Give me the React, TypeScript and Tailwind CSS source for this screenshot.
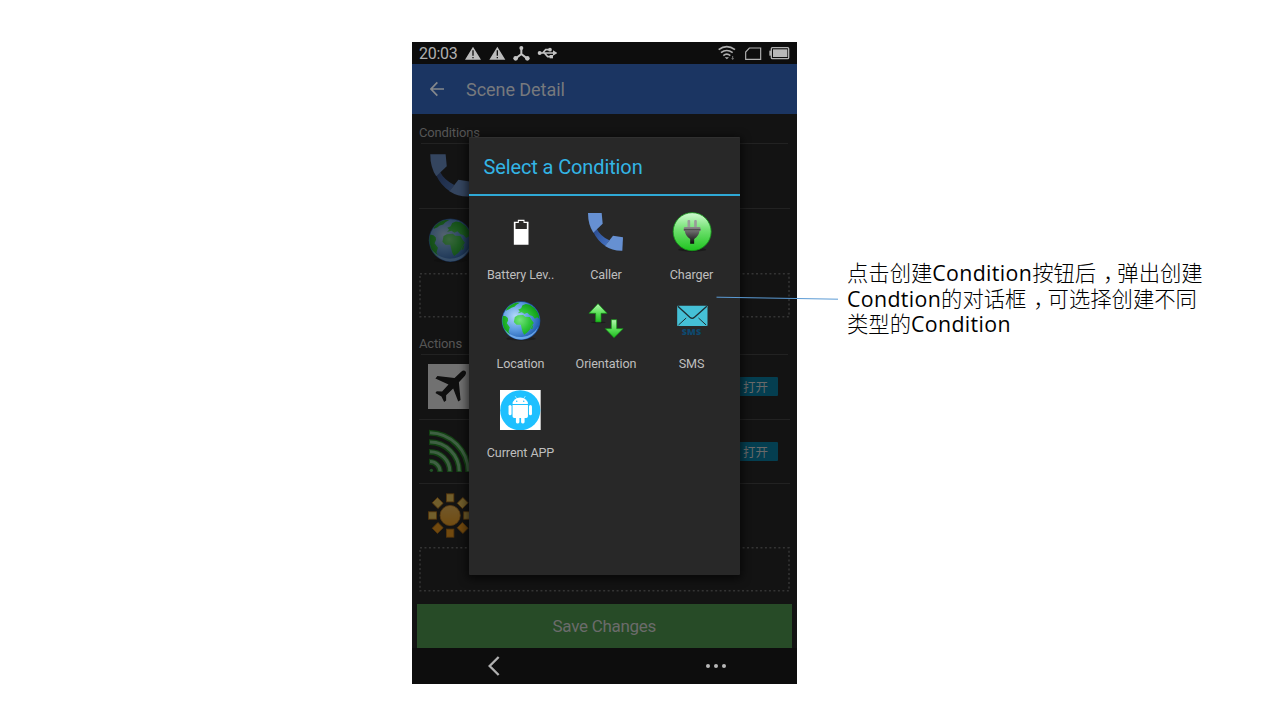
import type { ReactNode } from "react";

function Globe({ id, className }: { id: string; className: string }) {
  return (
    <svg viewBox="271.5 183 120 120" className={className}>
      <defs>
        <radialGradient id={`${id}-sea`} cx="0.35" cy="0.38" r="0.65">
          <stop offset="0" stopColor="#b3d9fa" />
          <stop offset="0.55" stopColor="#5f9de2" />
          <stop offset="1" stopColor="#2562b4" />
        </radialGradient>
        <radialGradient id={`${id}-land`} gradientUnits="userSpaceOnUse" cx="328" cy="240" r="60">
          <stop offset="0" stopColor="#72e27c" />
          <stop offset="0.5" stopColor="#2fc43a" />
          <stop offset="1" stopColor="#0c9a14" />
        </radialGradient>
        <clipPath id={`${id}-clip`}>
          <circle cx="331.5" cy="242" r="56" />
        </clipPath>
      </defs>
      <ellipse cx="331.5" cy="296" rx="44" ry="6" fill="#000" opacity="0.25" />
      <circle cx="331.5" cy="242" r="58" fill="#1d4f9c" />
      <circle cx="331.5" cy="242" r="56" fill={`url(#${id}-sea)`} />
      <g clipPath={`url(#${id}-clip)`} fill={`url(#${id}-land)`}>
        <path d="M272 226 L286 229 L292 234 L293 241 L289 250 L298 262 L294 275 L299 284 L288 284 L272 258 Z" />
        <path d="M290 200 L302 192 L318 187 L328 188 L318 194 L312 200 L303 203 L296 208 L286 212 Z" />
        <path d="M322 220 L328 214 L323 209 L332 205 L336 196 L346 192 L358 194 L372 204 L384 220 L388 238 L380 232 L373 236 L366 228 L358 226 L350 218 L342 222 L334 217 Z" />
        <path d="M313 231 L322 226 L338 225 L344 230 L358 231 L364 241 L370 249 L363 258 L359 268 L351 277 L341 284 L336 275 L333 263 L331 254 L318 254 L310 246 Z" />
        <path d="M364 257 L368 256 L366 266 L361 268 Z" />
      </g>
      <path d="M282 267 A54 54 0 0 0 383 260 A60 60 0 0 1 282 267" fill="#8cc6ff" opacity="0.65" />
    </svg>
  );
}

function Handset({ id, className }: { id: string; className: string }) {
  return (
    <svg viewBox="48 36 120 120" className={className}>
      <defs>
        <linearGradient id={id} x1="0" y1="0" x2="1" y2="1">
          <stop offset="0" stopColor="#2a4a8e" />
          <stop offset="1" stopColor="#4674c4" />
        </linearGradient>
      </defs>
      <path d="M70 96 L80 86 Q91 108 118 121 L106 138 Q82 122 70 96Z" fill={`url(#${id})`} />
      <path d="M54 39 L95 39 L98 71 L70 98 Q54 74 54 39Z" fill="#6690d2" />
      <path d="M129 107 L159 112 L157 152 Q128 153 105 138Z" fill="#6690d2" />
    </svg>
  );
}

function BatteryLevel() {
  return (
    <svg viewBox="271.5 276 120 120" className="size-10">
      <path d="M322 299 H342 V305 H354 V374 H310 V305 H322 Z" fill="#fff" />
      <path d="M325 303 H339 V309 H349 V327 H315 V309 H325 Z" fill="#2b2a28" />
    </svg>
  );
}

function Charger() {
  return (
    <svg viewBox="304.5 36 120 120" className="size-10">
      <defs>
        <linearGradient id="charger-face" x1="0" y1="0" x2="0" y2="1">
          <stop offset="0" stopColor="#d2fbd2" />
          <stop offset="0.45" stopColor="#6fe06f" />
          <stop offset="1" stopColor="#1fc41f" />
        </linearGradient>
        <linearGradient id="charger-plug" x1="0" y1="0" x2="0" y2="1">
          <stop offset="0" stopColor="#8b8b8b" />
          <stop offset="0.5" stopColor="#4a4a4a" />
          <stop offset="1" stopColor="#0a0a0a" />
        </linearGradient>
      </defs>
      <ellipse cx="365" cy="149" rx="42" ry="6" fill="#000" opacity="0.3" />
      <circle cx="365" cy="95" r="57" fill="url(#charger-face)" stroke="#16981a" strokeWidth="2.5" />
      <rect x="351" y="60" width="8" height="24" rx="3" fill="#9a9a9a" />
      <rect x="371" y="60" width="8" height="24" rx="3" fill="#9a9a9a" />
      <path d="M340 84 Q340 81 344 81 H386 Q390 81 390 84 V93 H387 Q386 107 371 117 V131 H359 V117 Q344 107 343 93 H340Z" fill="url(#charger-plug)" />
      <path d="M340 89 H390" stroke="#333" strokeWidth="2" />
    </svg>
  );
}

function Orientation() {
  return (
    <svg viewBox="48 33 120 120" className="size-10">
      <defs>
        <linearGradient id="arrow" x1="0" y1="0" x2="0" y2="1">
          <stop offset="0" stopColor="#b5f7b0" />
          <stop offset="0.5" stopColor="#5fe25c" />
          <stop offset="1" stopColor="#1fba1f" />
        </linearGradient>
      </defs>
      <ellipse cx="85" cy="97" rx="22" ry="3" fill="#000" opacity="0.3" />
      <path d="M84 41 L111 70 H93 V96 H77 V70 H57 Z" fill="url(#arrow)" stroke="#119a14" strokeWidth="2" strokeLinejoin="round" />
      <path d="M124 89 H140 V116 H159 L132 143 L106 116 H124 Z" fill="url(#arrow)" stroke="#119a14" strokeWidth="2" strokeLinejoin="round" />
    </svg>
  );
}

function Sms() {
  return (
    <div className="relative size-10">
      <svg viewBox="304.5 33 120 120" className="size-10">
        <rect x="320" y="47" width="91" height="61" rx="2" fill="#45c0d6" />
        <path d="M322 49 L358 82 Q365 88 372 82 L409 49" fill="none" stroke="#1f2e33" strokeWidth="4" />
        <path d="M324 105 L347 84 M407 105 L384 84" fill="none" stroke="#1f2e33" strokeWidth="3" />
      </svg>
      <span className="absolute inset-x-0 top-[26.500px] text-center font-['Open_Sans',sans-serif] text-[9px] leading-[10px] font-extrabold tracking-[0.100px] text-[#0d4a70]">SMS</span>
    </div>
  );
}

function CurrentApp() {
  return (
    <svg viewBox="271.5 105.5 121 121" className="size-[40.5px]">
      <rect x="271" y="105" width="122" height="122" fill="#fff" />
      <circle cx="332" cy="166" r="60" fill="#1ec0ff" />
      <g fill="#fff">
        <path d="M309 147 A23 19 0 0 1 355 147Z" />
        <path d="M309 150 H355 V184 Q355 189 350 189 H345 V202 A5.5 5.5 0 0 1 334.5 202 V189 H329.5 V202 A5.5 5.5 0 0 1 319 202 V189 H314 Q309 189 309 184Z" />
        <rect x="297" y="150" width="9" height="31" rx="4.5" />
        <rect x="358" y="150" width="9" height="31" rx="4.5" />
      </g>
      <path d="M317 124 L322 132 M347 124 L342 132" stroke="#fff" strokeWidth="1.8" />
      <circle cx="321.5" cy="139" r="2.2" fill="#1ec0ff" />
      <circle cx="342.5" cy="139" r="2.2" fill="#1ec0ff" />
    </svg>
  );
}

function Airplane() {
  return (
    <svg viewBox="54 30 134 134" className="size-[45px]">
      <rect x="54" y="30" width="134" height="134" fill="#fff" />
      <path
        d="M165 51 Q170 56 164 65 L146 84 L151 137 L144 142 L129 103 L108 123 L108 139 L102 143 L94 127 L76 116 L80 111 L96 112 L115 91 L76 73 L82 66 L133 72 L152 54 Q160 47 165 51Z"
        fill="#0a0a0a"
      />
    </svg>
  );
}

function Waves() {
  return (
    <svg viewBox="54 221 134 134" className="size-[45px]">
      <g fill="none" stroke="#128a12" strokeWidth="17">
        <path d="M57 232 A119 119 0 0 1 174 349" />
        <path d="M57 260 A89 89 0 0 1 147 349" />
        <path d="M57 289 A60 60 0 0 1 119 349" />
        <path d="M57 318 A32 32 0 0 1 90 349" />
      </g>
      <g fill="none" stroke="#7fd08a" strokeWidth="9">
        <path d="M60 232 A117 117 0 0 1 174 347" />
        <path d="M60 260 A87 87 0 0 1 147 347" />
        <path d="M60 289 A58 58 0 0 1 119 347" />
        <path d="M60 318 A30 30 0 0 1 90 347" />
      </g>
      <circle cx="64" cy="344" r="5" fill="#35b040" />
    </svg>
  );
}

const rays = [0, 45, 90, 135, 180, 225, 270, 315];

function Sun() {
  return (
    <svg viewBox="54 35 134 134" className="size-[45px]">
      <defs>
        <linearGradient id="sun-face" x1="0" y1="0" x2="0" y2="1">
          <stop offset="0" stopColor="#ffc050" />
          <stop offset="1" stopColor="#ffa210" />
        </linearGradient>
      </defs>
      {rays.map((angle) => {
        const a = (angle * Math.PI) / 180;
        const x = 120 + 52.5 * Math.sin(a);
        const y = 102 - 52.5 * Math.cos(a);
        return (
          <g key={angle} transform={`rotate(${angle} ${x} ${y})`}>
            <rect x={x - 11} y={y - 12} width="22" height="24" fill={angle > 90 && angle < 270 ? "#ff9a08" : "#ffcf50"} stroke="#b86a00" strokeWidth="2.5" />
          </g>
        );
      })}
      <circle cx="120" cy="102" r="30" fill="url(#sun-face)" stroke="#c87a10" strokeWidth="2.5" />
    </svg>
  );
}

function StatusBar() {
  return (
    <div className="flex h-[22px] items-center bg-[#0d0d0d] pl-[7px] text-[#b0b0b0]">
      <span className="w-[46px] pt-0.5 text-[16px] leading-[22px] tracking-[-0.3px] whitespace-nowrap">20:03</span>
      <svg viewBox="180 18 276 66" className="h-[22px] w-[92px]" fill="none">
        <path d="M204 32 L228 71 H180Z M277 32 L301 71 H253Z" fill="#bcbcbc" />
        <path d="M204 43 V59 M204 63 V67 M277 43 V59 M277 63 V67" stroke="#111" strokeWidth="4" />
        <g stroke="#c4c4c4" strokeWidth="6">
          <path d="M349 36 V54 L333 67 M349 54 L366 67" />
          <path d="M404 51 H448 M413 51 L422 41 H432 M418 51 L428 62 H440" strokeWidth="5" />
        </g>
        <g fill="#c4c4c4">
          <circle cx="349" cy="36" r="6" />
          <circle cx="332" cy="67" r="7" />
          <circle cx="367" cy="67" r="7" />
          <circle cx="404" cy="51" r="6" />
          <path d="M444 43 L457 51 L444 59Z" />
          <circle cx="435" cy="41" r="5.5" />
          <path d="M434 57 h10 v10 h-10z" />
        </g>
      </svg>
      <svg viewBox="354 18 216 66" className="mr-[7px] ml-auto h-[22px] w-[72px]" fill="none" stroke="#b0b0b0">
        <path d="M356 41 Q380 23 405 41" strokeWidth="5" />
        <path d="M363 50 Q380 37 398 50" strokeWidth="5" />
        <path d="M370 59 Q380 50 391 59" strokeWidth="5" />
        <path d="M374 64 H387 L380.5 70Z" fill="#b0b0b0" stroke="none" />
        <path d="M398 60 V70 M395 67 L398 70 L401 67" strokeWidth="2" />
        <path d="M448 36 H482 V70 H437 V48Z" strokeWidth="3.5" />
        <rect x="514" y="35" width="52" height="33" rx="3" strokeWidth="4" />
        <rect x="519" y="40" width="43" height="23" fill="#b8b8b8" stroke="none" />
        <rect x="508" y="44" width="5" height="15" fill="#b0b0b0" stroke="none" />
      </svg>
    </div>
  );
}

function SectionHeader({ children, className }: { children: ReactNode; className: string }) {
  return (
    <div className={`flex flex-col justify-end ${className}`}>
      <span className="text-[13px] leading-[15px] tracking-[-0.15px] text-[#565656]">{children}</span>
      <div className="mx-0.5 mt-[3px] h-px bg-[#222222]" />
    </div>
  );
}

function Row({ icon, toggle, className }: { icon: ReactNode; toggle?: boolean; className: string }) {
  return (
    <div className={`flex items-center justify-between border-[#222222] pr-3 pb-px pl-[9px] ${className}`}>
      <div className="opacity-40">{icon}</div>
      {toggle && (
        <span className="flex h-[19px] w-[46px] items-center justify-center rounded-[1px] bg-[#043e50] pl-px font-['Noto_Sans_CJK_SC',sans-serif] text-[12.5px] leading-[19px] text-[#696969]">打开</span>
      )}
    </div>
  );
}

function DottedBox() {
  return (
    <svg className="block h-[45px] w-[371px]" viewBox="0 0 371 45" fill="none">
      <rect x="1" y="0.8" width="369" height="43" stroke="#343434" strokeWidth="1.6" strokeDasharray="2 2.48" />
    </svg>
  );
}

function Tile({ label, children }: { label: string; children: ReactNode }) {
  return (
    <div className="flex h-[89.3px] flex-col items-center">
      <div className="flex h-[41px] items-center">{children}</div>
      <span className="mt-[14.5px] text-[12.6px] leading-[16px] tracking-[-0.1px] whitespace-nowrap text-[#bebebe]">{label}</span>
    </div>
  );
}

function ConditionDialog() {
  return (
    <div className="absolute top-[95px] left-[57px] flex h-[438px] w-[271px] flex-col rounded-[1px] border-t border-[#303030] bg-[#282828] shadow-[0_2px_8px_2px_rgba(0,0,0,0.6)]">
      <div className="flex h-[58px] items-center border-b-2 border-[#2fa9d6] pt-px pl-[14.5px] text-[20px] tracking-[-0.12px] text-[#33b5e5]">Select a Condition</div>
      <div className="grid grid-cols-3 pt-[15px] pr-[5.75px] pl-[8.75px]">
        <Tile label="Battery Lev.."><BatteryLevel /></Tile>
        <Tile label="Caller"><Handset id="caller" className="size-10" /></Tile>
        <Tile label="Charger"><Charger /></Tile>
        <Tile label="Location"><Globe id="location" className="size-10" /></Tile>
        <Tile label="Orientation"><Orientation /></Tile>
        <Tile label="SMS"><Sms /></Tile>
        <Tile label="Current APP"><CurrentApp /></Tile>
      </div>
    </div>
  );
}

function Phone() {
  return (
    <div className="relative mt-[42px] ml-[412px] flex h-[642px] w-[385px] shrink-0 flex-col bg-[#131313] font-[Roboto,sans-serif]">
      <StatusBar />
      <div className="flex h-[50px] items-center bg-[#1b3562] pl-[18px] text-[#77797d]">
        <svg viewBox="75 136 42 48" className="h-4 w-[14px]" fill="none" stroke="#85888c" strokeWidth="5">
          <path d="M117 160 H79 M97 140 L78 160 L97 180" />
        </svg>
        <span className="ml-[22px] text-[18px] tracking-[-0.05px]">Scene Detail</span>
      </div>
      <div className="flex h-[490px] flex-col px-[7px]">
        <SectionHeader className="h-[30px]">Conditions</SectionHeader>
        <Row className="h-[65px] border-b" icon={<Handset id="row-caller" className="size-[45px]" />} />
        <Row className="h-16" icon={<Globe id="row-location" className="size-[45px]" />} />
        <DottedBox />
        <SectionHeader className="h-[37px]">Actions</SectionHeader>
        <Row className="h-[65px] border-b" icon={<Airplane />} toggle />
        <Row className="h-16 border-b" icon={<Waves />} toggle />
        <Row className="h-[63px]" icon={<Sun />} />
        <DottedBox />
      </div>
      <div className="mr-[5.5px] ml-[5px] flex h-[44px] items-center justify-center bg-[#274b27] pt-0.5 text-[17px] tracking-[-0.3px] text-[#6b6b6b]">Save Changes</div>
      <div className="flex h-9 items-center justify-between bg-[#0d0d0d] pr-[71px] pl-[75.5px]">
        <svg viewBox="233 528 36 60" className="h-5 w-3" fill="none" stroke="#b0b0b0" strokeWidth="7">
          <path d="M265 531 L238 558 L265 585" />
        </svg>
        <div className="flex gap-[3.5px]">
          <i className="size-[4.5px] rounded-full bg-[#b8b8b8]" />
          <i className="size-[4.5px] rounded-full bg-[#b8b8b8]" />
          <i className="size-[4.5px] rounded-full bg-[#b8b8b8]" />
        </div>
      </div>
      <ConditionDialog />
    </div>
  );
}

function Latin({ children }: { children: ReactNode }) {
  return <span className="font-['Open_Sans',sans-serif] font-normal tracking-[0.35px]">{children}</span>;
}

function Comma() {
  return <span className="mr-[3.5px] ml-[7px] [font-feature-settings:'halt']">，</span>;
}

export default function App() {
  return (
    <div className="relative flex h-[720px] w-[1280px] items-start overflow-hidden bg-white">
      <Phone />
      <div className="mt-[259px] ml-[50px] font-['Noto_Sans_CJK_SC',sans-serif] text-[21.33px] leading-[25.6px] font-light whitespace-nowrap text-black">
        <div className="h-[25.6px]">点击创建<Latin>Condition</Latin>按钮后<Comma />弹出创建</div>
        <div className="h-[25.6px]"><Latin>Condtion</Latin>的对话框<Comma />可选择创建不同</div>
        <div className="h-[25.6px]">类型的<Latin>Condition</Latin></div>
      </div>
      <svg className="absolute top-[295px] left-[716px] h-[6px] w-[123px]" viewBox="0 0 123 6">
        <path d="M0.5 2.2 L122 4.2" stroke="#5b9bd5" strokeWidth="1" fill="none" />
      </svg>
    </div>
  );
}
